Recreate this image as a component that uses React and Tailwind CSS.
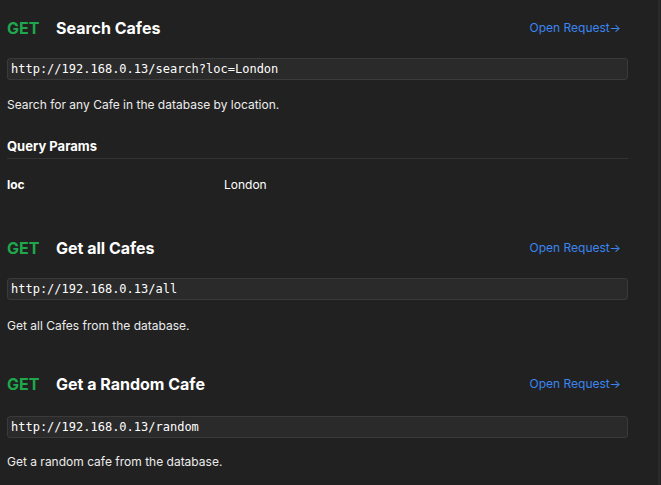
import React from "react";

function Title({ name }) {
  return (
    <div className="flex items-center justify-between h-[20px] pr-[7px]">
      <div className="flex items-center">
        <span className="w-[49px] text-[16px] font-bold text-[#1ea84b]">GET</span>
        <span className="text-[16px] font-bold text-white">{name}</span>
      </div>
      <span className="text-[12px] text-[#3b86f0]">Open Request→</span>
    </div>
  );
}

function Url({ url }) {
  return (
    <div className="h-[22px] flex items-center px-[3px] rounded-[3px] border border-[#3a3a3a] bg-[#2a2a2a] text-[12px] text-white" style={{ fontFamily: '"DejaVu Sans Mono", monospace' }}>
      {url}
    </div>
  );
}

export default function App() {
  return (
    <div className="flex w-full min-h-screen bg-[#212121]" style={{ fontFamily: "Inter, sans-serif" }}>
      <div className="flex-1 pl-[7px] pr-[30px]">
        <div className="pt-[18px]">
          <Title name="Search Cafes" />
          <div className="mt-[20px]"><Url url="http://192.168.0.13/search?loc=London" /></div>
          <p className="mt-[17px] text-[12px] leading-[16px] text-[#ececec]">Search for any Cafe in the database by location.</p>
          <div className="mt-[24px] pb-[3px] border-b border-[#333333] text-[13px] leading-[18px] font-bold text-white">Query Params</div>
          <div className="mt-[18px] flex text-[12px] leading-[16px] text-white">
            <span className="w-[217px] font-bold">loc</span>
            <span>London</span>
          </div>
        </div>
        <div className="mt-[45px]">
          <Title name="Get all Cafes" />
          <div className="mt-[20px]"><Url url="http://192.168.0.13/all" /></div>
          <p className="mt-[18px] text-[12px] leading-[16px] text-[#ececec]">Get all Cafes from the database.</p>
        </div>
        <div className="mt-[40px]">
          <Title name="Get a Random Cafe" />
          <div className="mt-[22px]"><Url url="http://192.168.0.13/random" /></div>
          <p className="mt-[16px] text-[12px] leading-[16px] text-[#ececec]">Get a random cafe from the database.</p>
        </div>
      </div>
      <div className="w-[2px] bg-[#2a2a2a]" />
      <div className="w-[1px]" />
    </div>
  );
}
